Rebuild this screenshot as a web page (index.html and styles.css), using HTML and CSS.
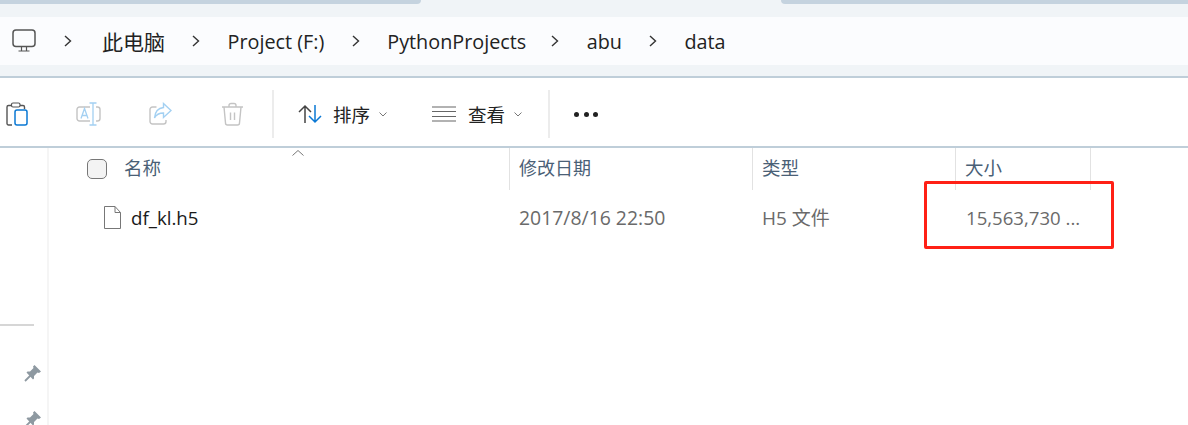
FILE: index.html
```html
<!DOCTYPE html>
<html lang="en">
<head>
  <meta charset="UTF-8">
  <meta name="viewport" content="width=device-width, initial-scale=1.0">
  <title>data</title>
  <link rel="stylesheet" href="styles.css">
</head>
<body>
  <div class="tabs">
    <div class="tab tab-left"></div>
    <div class="tab-active"></div>
    <div class="tab tab-right"></div>
  </div>

  <div class="address-area">
    <div class="address-bar">
      <svg class="pc-icon" width="24" height="24" viewBox="0 0 24 24" fill="none" stroke="#555" stroke-width="1.5">
        <rect x="1" y="1" width="22" height="16.500" rx="3"/>
        <path d="M6.500 22h11M9.500 18v4M14.500 18v4" stroke-width="1.200"/>
      </svg>
      <span class="chev">
        <svg width="8" height="12" viewBox="0 0 8 12" fill="none" stroke="#333" stroke-width="1.4"><path d="M1 1l5.500 5L1 11"/></svg>
      </span>
      <span class="crumb crumb-pc">此电脑</span>
      <span class="chev">
        <svg width="8" height="12" viewBox="0 0 8 12" fill="none" stroke="#333" stroke-width="1.4"><path d="M1 1l5.500 5L1 11"/></svg>
      </span>
      <span class="crumb">Project (F:)</span>
      <span class="chev">
        <svg width="8" height="12" viewBox="0 0 8 12" fill="none" stroke="#333" stroke-width="1.4"><path d="M1 1l5.500 5L1 11"/></svg>
      </span>
      <span class="crumb crumb-py">PythonProjects</span>
      <span class="chev">
        <svg width="8" height="12" viewBox="0 0 8 12" fill="none" stroke="#333" stroke-width="1.4"><path d="M1 1l5.500 5L1 11"/></svg>
      </span>
      <span class="crumb crumb-abu">abu</span>
      <span class="chev">
        <svg width="8" height="12" viewBox="0 0 8 12" fill="none" stroke="#333" stroke-width="1.4"><path d="M1 1l5.500 5L1 11"/></svg>
      </span>
      <span class="crumb">data</span>
    </div>
  </div>

  <div class="toolbar">
    <svg class="tool-paste" width="22" height="24" viewBox="0 0 22 24" fill="none">
      <path d="M6 23H2.500a1.500 1.500 0 0 1-1.500-1.500V5a1.500 1.500 0 0 1 1.500-1.500H17a1.500 1.500 0 0 1 1.500 1.500v2" stroke="#555" stroke-width="1.400"/>
      <rect x="5.500" y="1" width="8.500" height="4" rx="1.500" fill="#fff" stroke="#555" stroke-width="1.200"/>
      <rect x="9" y="8" width="12" height="15" rx="2" fill="#fff" stroke="#0a78d4" stroke-width="1.500"/>
    </svg>
    <svg class="tool-rename" width="25" height="24" viewBox="0 0 25 24" fill="none">
      <path d="M14 5H3.500A2.500 2.500 0 0 0 1 7.500v9A2.500 2.500 0 0 0 3.500 19H14M20 5h1.500A2.500 2.500 0 0 1 24 7.500v9a2.500 2.500 0 0 1-2.500 2.500H20" stroke="#c4c4c4" stroke-width="1.400"/>
      <path d="M17 1v22M13.500 1h7M13.500 23h7M5 16.500l3.500-10 3.500 10M6.300 13.500h4.400" stroke="#a3d0f2" stroke-width="1.300"/>
    </svg>
    <svg class="tool-share" width="23" height="24" viewBox="0 0 23 24" fill="none">
      <path d="M7.500 5H3.500A2.500 2.500 0 0 0 1 7.500v12A2.500 2.500 0 0 0 3.500 22h11a2.500 2.500 0 0 0 2.500-2.500V18" stroke="#c4c4c4" stroke-width="1.400"/>
      <path d="M14.500 1.500l7.500 7-7.500 7v-4.500c-4 0-7 1-9 5 .5-6 4-10 9-10.500z" fill="#fff" stroke="#a3d0f2" stroke-width="1.400"/>
    </svg>
    <svg class="tool-trash" width="23" height="24" viewBox="0 0 23 24" fill="none" stroke="#c4c4c4" stroke-width="1.400">
      <path d="M1 5h21M8 5V3.500A2 2 0 0 1 10 1.500h3a2 2 0 0 1 2 2V5M3 5l1.500 16A2 2 0 0 0 6.500 23h10a2 2 0 0 0 2-2L20 5M9.500 10.500v7.500M13.500 10.500v7.500"/>
    </svg>
    <div class="tool-sep"></div>
    <svg class="tool-sort" width="25" height="20" viewBox="0 0 25 20" fill="none" stroke-width="1.500">
      <path d="M7 19V2M1 8l6-6 6 6" stroke="#444"/>
      <path d="M17 1v17M11 12l6 6 6-6" stroke="#0a78d4"/>
    </svg>
    <span class="tool-label">排序</span>
    <svg class="caret" width="8" height="5" viewBox="0 0 8 5" fill="none" stroke="#777"><path d="M.5.500L4 4 7.500.500"/></svg>
    <svg class="tool-view" width="24" height="16" viewBox="0 0 24 16" fill="none" stroke="#666" stroke-width="1.200">
      <path d="M0 1h24M0 5.500h24M0 10.500h24M0 15h24"/>
    </svg>
    <span class="tool-label">查看</span>
    <svg class="caret" width="8" height="5" viewBox="0 0 8 5" fill="none" stroke="#777"><path d="M.5.500L4 4 7.500.500"/></svg>
    <div class="tool-sep sep-second"></div>
    <div class="more"><i></i><i></i><i></i></div>
  </div>

  <div class="main">
    <div class="nav-pane">
      <div class="nav-rule"></div>
      <svg class="pin pin-one" width="17" height="17" viewBox="0 0 17 17" fill="#8e99a1">
        <path d="M10.500 0L17 6.500l-2 1.500-1.500-.5-3.500 3.500v2.500l-1 1L2.500 7.500l1-1H6l3.500-3.500L9 1.500z"/>
        <path d="M6.500 10.500l-5.500 5.500" stroke="#8e99a1" stroke-width="1.800"/>
      </svg>
      <svg class="pin pin-two" width="17" height="17" viewBox="0 0 17 17" fill="#8e99a1">
        <path d="M10.500 0L17 6.500l-2 1.500-1.500-.5-3.500 3.500v2.500l-1 1L2.500 7.500l1-1H6l3.500-3.500L9 1.500z"/>
        <path d="M6.500 10.500l-5.500 5.500" stroke="#8e99a1" stroke-width="1.800"/>
      </svg>
    </div>
    <div class="list">
      <div class="head-row">
        <div class="col col-name">
          <span class="check"></span>
          <span class="head-text">名称</span>
          <svg class="sort-arrow" width="12" height="6" viewBox="0 0 12 6" fill="none" stroke="#777"><path d="M.5 5.500L6 .5l5.500 5"/></svg>
        </div>
        <div class="col col-date"><span class="head-text">修改日期</span></div>
        <div class="col col-type"><span class="head-text">类型</span></div>
        <div class="col col-size"><span class="head-text">大小</span></div>
      </div>
      <div class="file-row">
        <div class="cell cell-name">
          <svg width="17" height="23" viewBox="0 0 17 23" fill="#fff" stroke="#777" stroke-width="1"><path d="M.5.500h10.500l5.500 6v16H.5zM11 .5v6h5.500"/></svg>
          <span>df_kl.h5</span>
        </div>
        <div class="cell cell-date">2017/8/16 22:50</div>
        <div class="cell cell-type">H5 文件</div>
        <div class="cell cell-size">15,563,730 ...</div>
      </div>
    </div>
  </div>

  <div class="red-box"></div>
</body>
</html>
```

FILE: styles.css
```css
* {
  box-sizing: border-box;
}
html, body {
  margin: 0;
  padding: 0;
  width: 1188px;
  height: 425px;
  overflow: hidden;
}
body {
  position: relative;
  background-color: #fff;
  font-family: "Noto Sans CJK SC", "Noto Sans", sans-serif;
  color: #1a1a1a;
}

/* tab strip */
.tabs {
  display: flex;
  height: 4px;
  background-color: #f0f4f7;
}
.tab {
  height: 4px;
  background-color: #c5d3df;
}
.tab-left {
  width: 421px;
  border-bottom-right-radius: 6px;
}
.tab-active {
  width: 360px;
}
.tab-right {
  flex: 1;
  border-bottom-left-radius: 6px;
}

/* address bar */
.address-area {
  height: 74px;
  padding-top: 13px;
  background-color: #f0f4f7;
  border-bottom: 2px solid #bfced9;
}
.address-bar {
  display: flex;
  align-items: center;
  height: 48px;
  padding-left: 12px;
  background-color: #fbfcfe;
  font-size: 19.8px;
  color: #222;
}
.pc-icon {
  margin-right: 28px;
}
.chev {
  display: flex;
  margin-right: 27.500px;
}
.crumb {
  margin-right: 27.500px;
  font-family: "Open Sans", "Noto Sans CJK SC", sans-serif;
}
.chev:first-of-type {
  margin-right: 30px;
}
.crumb-pc {
  margin-right: 27px;
  font-size: 21px;
  font-family: "Noto Sans CJK SC", sans-serif;
}
.crumb-py {
  margin-right: 25px;
}
.crumb-abu {
  margin-right: 27px;
}

/* command bar */
.toolbar {
  display: flex;
  align-items: center;
  height: 70px;
  border-bottom: 2px solid #bfced9;
  padding-left: 6px;
  padding-top: 4px;
  font-size: 18.500px;
}
.tool-paste {
  margin-right: 48px;
}
.tool-rename {
  margin-right: 48px;
}
.tool-share {
  margin-right: 49px;
}
.tool-trash {
  margin-right: 28px;
}
.tool-sep {
  width: 2px;
  height: 48px;
  background-color: #ececec;
}
.tool-sort {
  margin-left: 24px;
  margin-right: 10px;
}
.tool-label {
  color: #222;
}
.caret {
  margin-left: 9px;
}
.tool-view {
  margin-left: 45px;
  margin-right: 12px;
}
.sep-second {
  margin-left: 26px;
  margin-right: 24px;
}
.more {
  display: flex;
  gap: 4.500px;
}
.more i {
  width: 5px;
  height: 5px;
  border-radius: 50%;
  background-color: #222;
}

/* main area */
.main {
  display: flex;
  height: 277px;
}
.nav-pane {
  position: relative;
  width: 49px;
  border-right: 2px solid #f5f5f5;
}
.nav-rule {
  position: absolute;
  top: 176px;
  left: 0;
  width: 34px;
  height: 2px;
  background-color: #d6d6d6;
}
.pin {
  position: absolute;
  left: 24px;
}
.pin-one {
  top: 217px;
}
.pin-two {
  top: 263px;
}

.list {
  flex: 1;
  font-size: 18.500px;
}
.head-row {
  display: flex;
  height: 42px;
  color: #4a6076;
}
.head-text {
  padding-bottom: 4px;
}
.col {
  display: flex;
  align-items: center;
  border-right: 1px solid #e2e2e2;
}
.col-name {
  position: relative;
  width: 461px;
  padding-left: 38px;
}
.check {
  width: 20px;
  height: 20px;
  margin-right: 17px;
  border: 1px solid #777;
  border-radius: 5px;
  background-color: #f3f3f3;
}
.sort-arrow {
  position: absolute;
  top: 2px;
  left: 243px;
}
.col-date {
  width: 243px;
  padding-left: 9px;
  font-size: 18px;
}
.col-type {
  width: 203px;
  padding-left: 9px;
}
.col-size {
  width: 135px;
  padding-left: 9px;
}
.file-row {
  display: flex;
  align-items: center;
  height: 54px;
  color: #6a6a6a;
  font-size: 19px;
}
.cell {
  display: flex;
  align-items: center;
  padding-left: 9px;
  font-family: "Open Sans", "Noto Sans CJK SC", sans-serif;
}
.cell-name {
  width: 461px;
  padding-left: 55px;
  gap: 10px;
  color: #1a1a1a;
  font-size: 18.700px;
}
.cell-date {
  width: 243px;
  font-size: 19.400px;
}
.cell-type {
  width: 204px;
}
.cell-size {
  padding-left: 9px;
  width: 140px;
  font-size: 18.600px;
}

/* annotation drawn over the screenshot */
.red-box {
  position: absolute;
  left: 924px;
  top: 181px;
  width: 190px;
  height: 68px;
  border: 3px solid #ff2016;
  border-radius: 2px;
}
```
